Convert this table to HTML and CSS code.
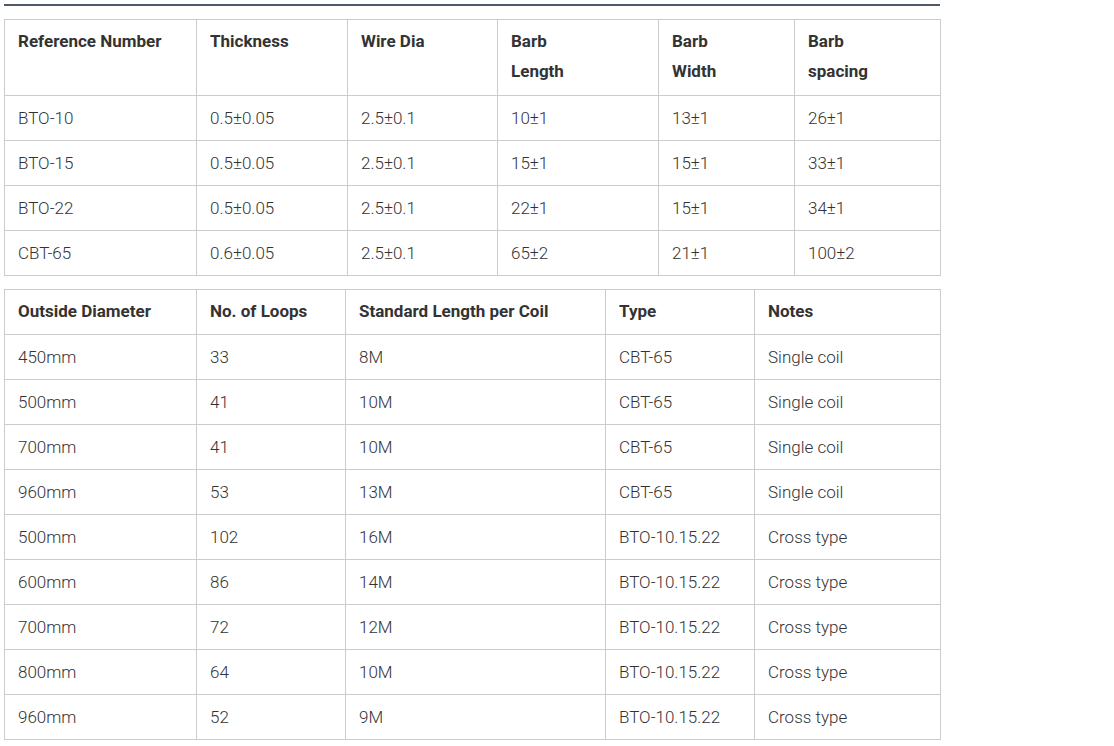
FILE: index.html
```html
<!DOCTYPE html>
<html>
<head>
<meta charset="utf-8">
<link rel="stylesheet" href="styles.css">
</head>
<body>
<div class="page">
  <div class="rule"></div>
  <table class="spec t1">
    <colgroup>
      <col class="c1a"><col class="c1b"><col class="c1c"><col class="c1d"><col class="c1e"><col class="c1f">
    </colgroup>
    <thead>
      <tr class="head2">
        <th>Reference Number</th>
        <th>Thickness</th>
        <th>Wire Dia</th>
        <th>Barb<br>Length</th>
        <th>Barb<br>Width</th>
        <th>Barb<br>spacing</th>
      </tr>
    </thead>
    <tbody>
      <tr><td>BTO-10</td><td>0.5±0.05</td><td>2.5±0.1</td><td>10±1</td><td>13±1</td><td>26±1</td></tr>
      <tr><td>BTO-15</td><td>0.5±0.05</td><td>2.5±0.1</td><td>15±1</td><td>15±1</td><td>33±1</td></tr>
      <tr><td>BTO-22</td><td>0.5±0.05</td><td>2.5±0.1</td><td>22±1</td><td>15±1</td><td>34±1</td></tr>
      <tr><td>CBT-65</td><td>0.6±0.05</td><td>2.5±0.1</td><td>65±2</td><td>21±1</td><td>100±2</td></tr>
    </tbody>
  </table>
  <table class="spec t2">
    <colgroup>
      <col class="c2a"><col class="c2b"><col class="c2c"><col class="c2d"><col class="c2e">
    </colgroup>
    <thead>
      <tr>
        <th>Outside Diameter</th>
        <th>No. of Loops</th>
        <th>Standard Length per Coil</th>
        <th>Type</th>
        <th>Notes</th>
      </tr>
    </thead>
    <tbody>
      <tr><td>450mm</td><td>33</td><td>8M</td><td>CBT-65</td><td>Single coil</td></tr>
      <tr><td>500mm</td><td>41</td><td>10M</td><td>CBT-65</td><td>Single coil</td></tr>
      <tr><td>700mm</td><td>41</td><td>10M</td><td>CBT-65</td><td>Single coil</td></tr>
      <tr><td>960mm</td><td>53</td><td>13M</td><td>CBT-65</td><td>Single coil</td></tr>
      <tr><td>500mm</td><td>102</td><td>16M</td><td>BTO-10.15.22</td><td>Cross type</td></tr>
      <tr><td>600mm</td><td>86</td><td>14M</td><td>BTO-10.15.22</td><td>Cross type</td></tr>
      <tr><td>700mm</td><td>72</td><td>12M</td><td>BTO-10.15.22</td><td>Cross type</td></tr>
      <tr><td>800mm</td><td>64</td><td>10M</td><td>BTO-10.15.22</td><td>Cross type</td></tr>
      <tr><td>960mm</td><td>52</td><td>9M</td><td>BTO-10.15.22</td><td>Cross type</td></tr>
    </tbody>
  </table>
</div>
</body>
</html>
```
FILE: styles.css
```css
html, body {
  margin: 0;
  padding: 0;
  background: #ffffff;
}
body {
  font-family: Roboto, "Liberation Sans", Arial, sans-serif;
  font-size: 17px;
  color: #333333;
}
.page {
  width: 936px;
  padding: 4px 0 0 4px;
}
.rule {
  height: 2px;
  background: #4d5868;
  margin-bottom: 13px;
}
.spec {
  width: 936px;
  border-collapse: collapse;
  table-layout: fixed;
}
.t1 {
  margin-bottom: 13px;
}
.spec th, .spec td {
  border: 1px solid #cccccc;
  padding: 7px 13px;
  line-height: 30px;
  text-align: left;
  vertical-align: top;
}
.spec th {
  font-weight: 700;
  color: #333333;
  padding-top: 6px;
  padding-bottom: 8px;
}
.head2 th {
  padding-bottom: 9px;
}
.spec td {
  font-weight: 300;
  color: #333333;
}
.c1a { width: 192px; }
.c1b { width: 151px; }
.c1c { width: 150px; }
.c1d { width: 161px; }
.c1e { width: 136px; }
.c1f { width: 146px; }
.c2a { width: 192px; }
.c2b { width: 149px; }
.c2c { width: 260px; }
.c2d { width: 149px; }
.c2e { width: 186px; }
```
